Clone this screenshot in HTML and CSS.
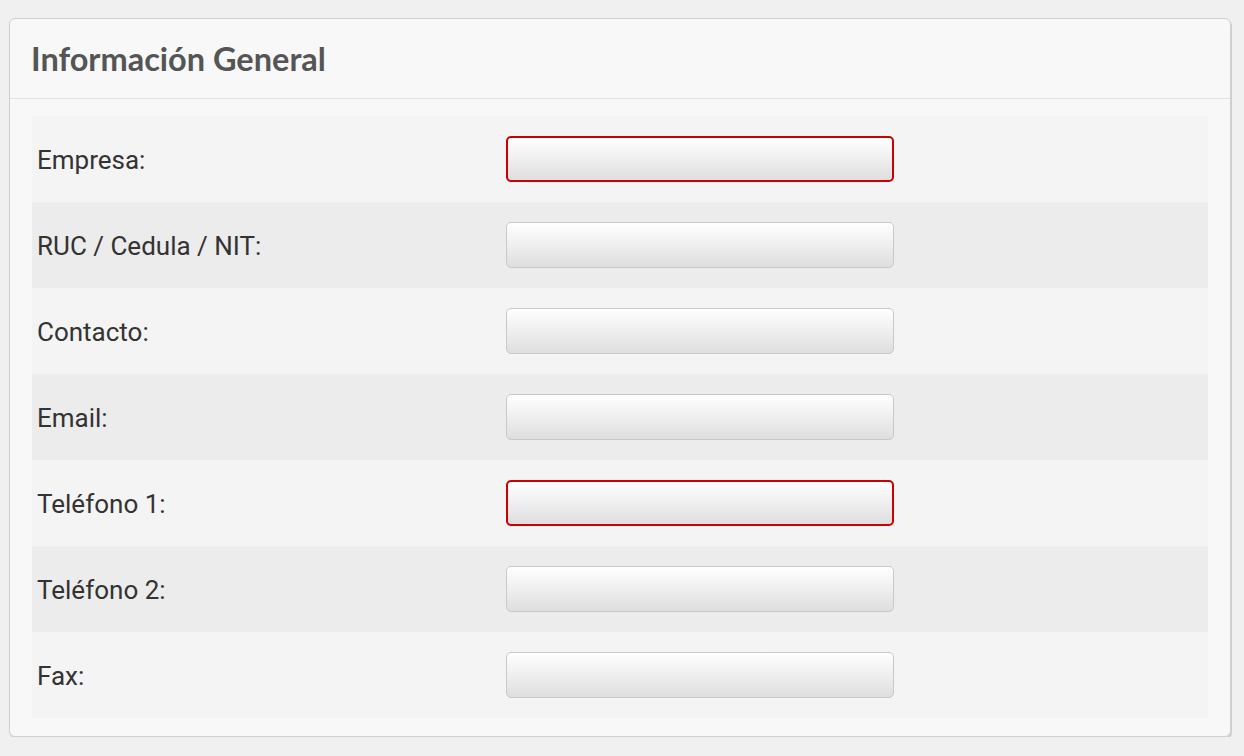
FILE: index.html
```html
<!DOCTYPE html>
<html lang="es">
<head>
<meta charset="utf-8">
<title>Información General</title>
<link rel="stylesheet" href="styles.css">
</head>
<body>
<section class="card">
  <header class="card-header">
    <h2 class="card-title">Información General</h2>
  </header>
  <div class="card-body">
    <div class="rows">
      <div class="row"><label class="label">Empresa:</label><input class="field field-error" type="text"></div>
      <div class="row"><label class="label">RUC / Cedula / NIT:</label><input class="field" type="text"></div>
      <div class="row"><label class="label">Contacto:</label><input class="field" type="text"></div>
      <div class="row"><label class="label">Email:</label><input class="field" type="text"></div>
      <div class="row"><label class="label">Teléfono 1:</label><input class="field field-error" type="text"></div>
      <div class="row"><label class="label">Teléfono 2:</label><input class="field" type="text"></div>
      <div class="row"><label class="label">Fax:</label><input class="field" type="text"></div>
    </div>
  </div>
</section>
</body>
</html>
```

FILE: styles.css
```css
html, body {
  margin: 0;
  padding: 0;
}
body {
  background: #f0f0f0;
  padding: 18px 12px 0 9px;
  font-family: Roboto, "Liberation Sans", sans-serif;
}
.card {
  background: #f8f8f8;
  border: 1px solid #cfcfcf;
  border-radius: 6px;
  box-shadow: 1px 2px 0 #cfcfcf;
  width: 1220px;
}
.card-header {
  height: 79px;
  border-bottom: 1px solid #e2e2e2;
  display: flex;
  align-items: center;
  padding: 0 21px;
}
.card-title {
  margin: 0;
  font-family: Lato, "Open Sans", sans-serif;
  font-weight: 700;
  font-size: 32.5px;
  color: #555555;
  letter-spacing: 0;
}
.card-body {
  padding: 17px 22px 18px 22px;
}
.rows {
  display: flex;
  flex-direction: column;
}
.row {
  height: 86px;
  display: grid;
  grid-template-columns: 469px 388px;
  align-items: center;
  padding-left: 5px;
  background: #f4f4f4;
}
.row:nth-child(even) {
  background: #ececec;
}
.label {
  font-size: 26px;
  color: #333333;
  padding-top: 2px;
}
.field {
  box-sizing: border-box;
  width: 388px;
  height: 46px;
  margin: 0;
  border: 1.5px solid #c9c9c9;
  border-radius: 5px;
  background: linear-gradient(#ffffff, #dedede);
  outline: none;
}
.field-error {
  border: 2px solid #cc0000;
}
```
